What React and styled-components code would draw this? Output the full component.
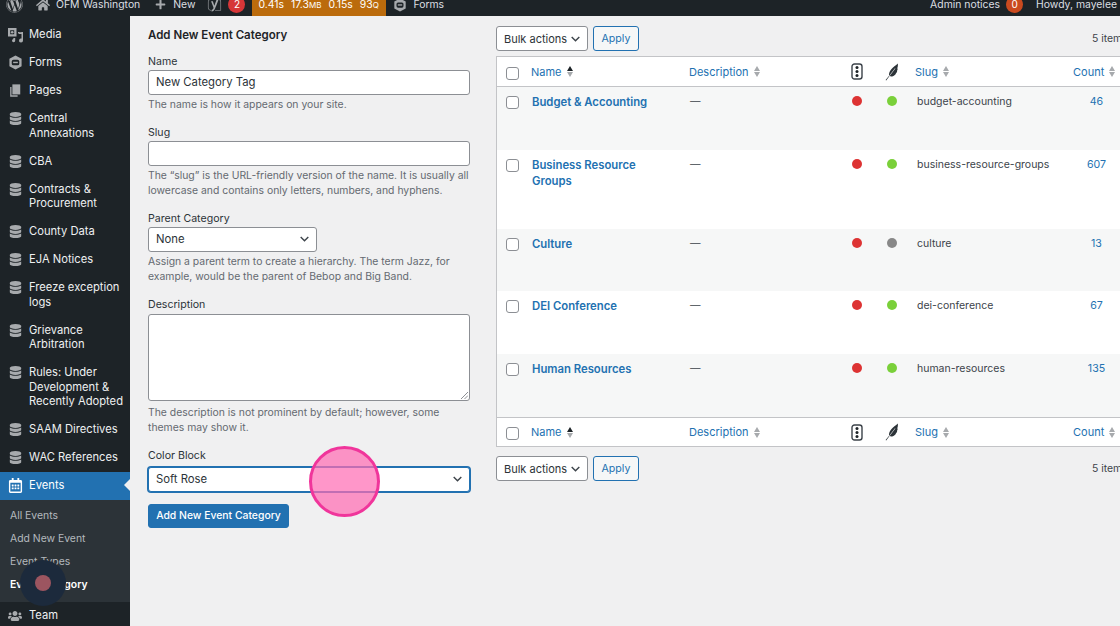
import React from 'react';
import styled, { createGlobalStyle } from 'styled-components';
import { FaWordpress, FaHome, FaPlus, FaDatabase, FaUsers, FaRegCalendarAlt, FaYoast } from 'react-icons/fa';

const GlobalStyle = createGlobalStyle`
  html, body {
    margin: 0;
    height: 100%;
    overflow: hidden;
    background: #f0f0f1;
    font-family: Inter, "Liberation Sans", sans-serif;
    font-size: 11.3px;
    color: #3c434a;
  }
`;

const Page = styled.div`
  position: relative;
  width: 1120px;
  height: 626px;
  overflow: hidden;
`;

const TopBar = styled.div`
  height: 16px;
  background: #1d2327;
  color: #dcdfe2;
  font-size: 10.4px;
  display: flex;
  align-items: center;
  justify-content: space-between;
  overflow: hidden;
`;

const BarGroup = styled.div`
  display: flex;
  align-items: center;
  height: 16px;
  margin-top: -7px;
  line-height: 16px;
  white-space: nowrap;
`;

const BarItem = styled.span`
  display: inline-flex;
  align-items: center;
  gap: ${({ $gap }) => $gap || 8}px;
  margin-left: ${({ $left }) => $left || 0}px;
`;

const Badge = styled.span`
  display: inline-block;
  width: 17px;
  height: 17px;
  border-radius: 9px;
  background: ${({ $color }) => $color};
  color: #fff;
  text-align: center;
  font-size: 10px;
  line-height: 16px;
  margin-left: ${({ $left }) => $left || 0}px;
`;

const Timer = styled.span`
  display: flex;
  box-sizing: border-box;
  gap: 7px;
  width: 134px;
  background: #bb6b0c;
  color: #fff;
  padding: 0 0 0 6px;
  margin-left: 7px;
  height: 32px;
  align-items: center;
  small { font-size: 8px; }
`;

const Body = styled.div`
  display: flex;
  height: 610px;
`;

const Sidebar = styled.nav`
  width: 130px;
  flex: none;
  background: #1d2327;
  padding-top: 4.5px;
  color: #eef0f1;
  font-size: 11.2px;
`;

const MenuItem = styled.div`
  position: relative;
  display: flex;
  padding: 6.75px 0;
  line-height: 14.5px;
  background: ${({ $active }) => ($active ? '#2271b1' : 'transparent')};
  color: ${({ $active }) => ($active ? '#fff' : '#eef0f1')};
  span:last-child { max-width: 100px; }
  ${({ $active }) =>
    $active &&
    `&::after {
      content: '';
      position: absolute;
      right: 0;
      top: 7px;
      border: 6.5px solid transparent;
      border-right-color: #f0f0f1;
      border-left: 0;
    }`}
`;

const MenuIcon = styled.span`
  width: 29px;
  height: 14.5px;
  flex: none;
  display: flex;
  align-items: center;
  justify-content: center;
  padding-left: 1px;
  box-sizing: border-box;
  color: ${({ $active }) => ($active ? '#fff' : '#a7aaad')};
  svg { display: block; }
`;

const SubMenu = styled.div`
  background: #2c3338;
  padding: 4px 0 6px;
`;

const SubItem = styled.div`
  padding-left: 10px;
  height: 23px;
  line-height: 23px;
  font-size: 10.4px;
  color: ${({ $current }) => ($current ? '#fff' : '#b4b9be')};
  font-weight: ${({ $current }) => ($current ? 600 : 400)};
`;

const Content = styled.main`
  flex: 1;
  min-width: 0;
  display: flex;
  gap: 26px;
  padding-left: 18px;
`;

const FormColumn = styled.section`
  width: 322px;
  flex: none;
`;

const Heading = styled.h2`
  margin: 11.5px 0 12px;
  font-size: 11.5px;
  font-weight: 600;
  line-height: 14px;
  color: #1d2327;
`;

const Field = styled.div`
  margin-bottom: ${({ $gap }) => $gap ?? 13}px;
`;

const Label = styled.label`
  display: block;
  font-size: 10.6px;
  line-height: 15px;
  margin-bottom: ${({ $gap }) => $gap ?? 1.5}px;
  color: #2c3338;
`;

const TextInput = styled.div`
  box-sizing: border-box;
  height: 24.5px;
  background: #fff;
  border: 1px solid #8c8f94;
  border-radius: 3px;
  padding: 0 7px;
  line-height: 23px;
  color: #2c3338;
`;

const TextArea = styled.div`
  position: relative;
  box-sizing: border-box;
  height: 86.5px;
  background: #fff;
  border: 1px solid #8c8f94;
  border-radius: 3px;
`;

const Hint = styled.p`
  margin: ${({ $top }) => $top ?? 2}px 0 0;
  font-size: 10.4px;
  line-height: 15px;
  color: #646970;
`;

const SelectBox = styled.div`
  box-sizing: border-box;
  display: flex;
  align-items: center;
  justify-content: space-between;
  width: ${({ $width }) => ($width ? `${$width}px` : '100%')};
  height: 24.5px;
  background: #fff;
  border: 1px solid ${({ $focus }) => ($focus ? '#2271b1' : '#8c8f94')};
  box-shadow: ${({ $focus }) => ($focus ? '0 0 0 1px #2271b1' : 'none')};
  border-radius: 3px;
  padding: 0 7px;
  color: #2c3338;
`;

const PrimaryButton = styled.button`
  display: block;
  box-sizing: border-box;
  width: 141px;
  height: 24.5px;
  padding: 0;
  background: #2271b1;
  border: 1px solid #2271b1;
  border-radius: 3px;
  color: #fff;
  font: 500 10.4px Inter, sans-serif;
`;

const TableColumn = styled.section`
  width: 660px;
  flex: none;
`;

const Toolbar = styled.div`
  display: flex;
  align-items: center;
  gap: 5px;
  height: 25px;
  margin: ${({ $top }) => $top}px 0 ${({ $bottom }) => $bottom}px;
`;

const Bulk = styled(SelectBox)`
  width: 92px;
  height: 25px;
  font-size: 11px;
  white-space: nowrap;
`;

const ApplyButton = styled.button`
  box-sizing: border-box;
  height: 25px;
  width: 46px;
  padding: 0;
  background: #f6f7f7;
  border: 1px solid #2271b1;
  border-radius: 3px;
  color: #2271b1;
  font: 400 10.6px Inter, sans-serif;
`;

const ItemCount = styled.span`
  margin-left: 448px;
  font-size: 10.4px;
  white-space: nowrap;
`;

const Table = styled.div`
  background: #fff;
  border: 1px solid #c3c4c7;
  width: 660px;
  box-sizing: border-box;
`;

const Row = styled.div`
  display: grid;
  grid-template-columns: 34px 158px 151px 34px 36px 163px 1fr;
  height: ${({ $h }) => $h}px;
  box-sizing: border-box;
  background: ${({ $alt }) => ($alt ? '#f6f7f7' : '#fff')};
  border-top: ${({ $top }) => ($top ? '1px solid #c3c4c7' : '0')};
  border-bottom: ${({ $bottom }) => ($bottom ? '1px solid #c3c4c7' : '0')};
`;

const Cell = styled.div`
  padding: 7px 0 0 ${({ $left }) => $left || 0}px;
  line-height: 16px;
  display: ${({ $center }) => ($center ? 'flex' : 'block')};
  justify-content: center;
  font-size: 10.5px;
`;

const CountCell = styled(Cell)`
  width: 47px;
  text-align: center;
  color: #2271b1;
  font-size: 10.6px;
`;

const HeadCell = styled.div`
  display: flex;
  align-items: center;
  justify-content: ${({ $center }) => ($center ? 'center' : 'flex-start')};
  gap: 5px;
  color: #2271b1;
  font-size: 11px;
  padding-left: ${({ $left }) => $left || 0}px;
`;

const Check = styled.span`
  display: block;
  box-sizing: border-box;
  width: 13px;
  height: 13px;
  margin: ${({ $top }) => $top}px 0 0 9px;
  background: #fff;
  border: 1px solid #8c8f94;
  border-radius: 3px;
`;

const TermLink = styled.a`
  display: block;
  color: #2271b1;
  font-weight: 600;
  font-size: 11.3px;
  padding-right: 30px;
`;

const Dot = styled.span`
  width: 10px;
  height: 10px;
  border-radius: 50%;
  margin-top: 2px;
  background: ${({ $color }) => $color};
`;

const SortArrows = styled.span`
  display: inline-flex;
  flex-direction: column;
  gap: 1px;
  &::before, &::after {
    content: '';
    border-left: 3.5px solid transparent;
    border-right: 3.5px solid transparent;
  }
  &::before { border-bottom: 5px solid ${({ $up }) => ($up ? '#1d2327' : '#a7aaad')}; }
  &::after { border-top: 5px solid #a7aaad; }
`;

const Ring = styled.div`
  position: absolute;
  box-sizing: border-box;
  border-radius: 50%;
  left: ${({ $x }) => $x}px;
  top: ${({ $y }) => $y}px;
  width: ${({ $size }) => $size}px;
  height: ${({ $size }) => $size}px;
  background: ${({ $bg }) => $bg};
  border: ${({ $border }) => $border || 'none'};
`;

const TextAreaGrip = styled.svg`
  position: absolute;
  right: 1px;
  bottom: 1px;
`;

const Chevron = () => (
  <svg width="9" height="6" viewBox="0 0 9 6" fill="none" stroke="#3c434a" strokeWidth="1.4">
    <path d="M.7 1 4.500 4.800 8.300 1" />
  </svg>
);

const FormsIcon = ({ size = 16, cut = '#1d2327' }) => (
  <svg width={size} height={size} viewBox="0 0 16 16" fill="currentColor">
    <path d="M8 .5 14.500 4v8L8 15.500 1.500 12V4z" />
    <rect x="4" y="5" width="8" height="6" rx="1.800" fill={cut} />
    <rect x="5.500" y="7.200" width="5" height="1.500" fill="currentColor" />
  </svg>
);

const MediaIcon = () => (
  <svg width="17" height="16" viewBox="0 0 17 16" fill="currentColor">
    <path d="M1 1h8.500v8.500H1z M3.200 3.200v4h4v-4z" fillRule="evenodd" />
    <circle cx="5.200" cy="5.200" r="1.300" />
    <path d="M11 5h1.500v1.500H11z M15 5h1v8.500a2 2 0 1 1-1.500-1.900V7H12V5.500z" />
    <path d="M6 11h2.200v2.500a1.600 1.600 0 1 1-1.500-1.500z" />
  </svg>
);

const PagesIcon = () => (
  <svg width="14" height="15" viewBox="0 0 16 16" fill="currentColor">
    <path d="M5 1h9v11.500H5z" />
    <path d="M2.500 4H4v9.500h7V15H2.500z" />
  </svg>
);

const TrafficIcon = () => (
  <svg width="12" height="17" viewBox="0 0 12 17">
    <rect x="1" y="1" width="10" height="15" rx="2.500" fill="none" stroke="#3c434a" strokeWidth="1.400" />
    <circle cx="6" cy="4.600" r="1.500" fill="#1d2327" />
    <circle cx="6" cy="8.500" r="1.500" fill="#1d2327" />
    <circle cx="6" cy="12.400" r="1.500" fill="#1d2327" />
  </svg>
);

const QuillIcon = () => (
  <svg width="14" height="18" viewBox="0 0 14 18" fill="#2c3338">
    <path d="M12.800.6c.3 2-.1 3.600-.5 4.600.5.400.4 1.600-.2 2.400.2.900-.3 2.200-1.200 3-.4 1.400-2 2.600-3.700 2.800-1 .1-2 0-2.700-.4L1.200 17.500.6 17l3.500-4.300C3.700 11 4.300 8.500 6.300 6.300 8 4.400 10.800 2.500 12.800.6z" />
    <path d="M3.800 13.200 10 5.300l.4.300-6.200 7.900z" fill="#fff" />
  </svg>
);

const menu = [
  { icon: <MediaIcon />, label: 'Media' },
  { icon: <FormsIcon size={15} />, label: 'Forms' },
  { icon: <PagesIcon />, label: 'Pages' },
  { label: 'Central Annexations' },
  { label: 'CBA' },
  { label: 'Contracts & Procurement' },
  { label: 'County Data' },
  { label: 'EJA Notices' },
  { label: 'Freeze exception logs' },
  { label: 'Grievance Arbitration' },
  { label: 'Rules: Under Development & Recently Adopted' },
  { label: 'SAAM Directives' },
  { label: 'WAC References' },
];

const terms = [
  { name: 'Budget & Accounting', slug: 'budget-accounting', count: 46, h: 63, alt: true, seo: '#7ad03a' },
  { name: 'Business Resource Groups', slug: 'business-resource-groups', count: 607, h: 79, seo: '#7ad03a' },
  { name: 'Culture', slug: 'culture', count: 13, h: 62, alt: true, seo: '#888888' },
  { name: 'DEI Conference', slug: 'dei-conference', count: 67, h: 63, seo: '#7ad03a' },
  { name: 'Human Resources', slug: 'human-resources', count: 135, h: 63, alt: true, seo: '#7ad03a' },
];

const HeaderRow = ({ top, bottom }) => (
  <Row $h={top ? 29 : 30} $top={top} $bottom={bottom}>
    <Check $top={top ? 9 : 10} />
    <HeadCell>Name <SortArrows $up /></HeadCell>
    <HeadCell>Description <SortArrows /></HeadCell>
    <HeadCell $center><TrafficIcon /></HeadCell>
    <HeadCell $center><QuillIcon /></HeadCell>
    <HeadCell $left={5}>Slug <SortArrows /></HeadCell>
    <HeadCell>Count <SortArrows /></HeadCell>
  </Row>
);

const Tools = ({ top, bottom }) => (
  <Toolbar $top={top} $bottom={bottom}>
    <Bulk>Bulk actions <Chevron /></Bulk>
    <ApplyButton>Apply</ApplyButton>
    <ItemCount>5 items</ItemCount>
  </Toolbar>
);

export default function App() {
  return (
    <Page>
      <GlobalStyle />
      <TopBar>
        <BarGroup>
          <BarItem $left={6}><FaWordpress size={17} color="#a7aaad" /></BarItem>
          <BarItem $left={13} $gap={6}><FaHome size={14} color="#a7aaad" />OFM Washington</BarItem>
          <BarItem $left={15} $gap={7}><FaPlus size={11} color="#a7aaad" />New</BarItem>
          <BarItem $left={12}><FaYoast size={15} color="#a7aaad" /></BarItem>
          <Badge $color="#d63638" $left={6}>2</Badge>
          <Timer>
            <span>0.41s</span>
            <span>17.3<small>MB</small></span>
            <span>0.15s</span>
            <span>93<small>Q</small></span>
          </Timer>
          <BarItem $left={7} $gap={6} style={{ color: '#a7aaad' }}>
            <FormsIcon size={14} />
            <span style={{ color: '#dcdfe2' }}>Forms</span>
          </BarItem>
        </BarGroup>
        <BarGroup>
          <span>Admin notices</span>
          <Badge $color="#ca4a1f" $left={6}>0</Badge>
          <BarItem $left={13} style={{ marginRight: 3 }}>Howdy, mayelee</BarItem>
        </BarGroup>
      </TopBar>
      <Body>
        <Sidebar>
          {menu.map((m) => (
            <MenuItem key={m.label}>
              <MenuIcon>{m.icon || <FaDatabase size={13} />}</MenuIcon>
              <span>{m.label}</span>
            </MenuItem>
          ))}
          <MenuItem $active>
            <MenuIcon $active><FaRegCalendarAlt size={15} /></MenuIcon>
            <span>Events</span>
          </MenuItem>
          <SubMenu>
            <SubItem>All Events</SubItem>
            <SubItem>Add New Event</SubItem>
            <SubItem>Event Types</SubItem>
            <SubItem $current>Event Category</SubItem>
          </SubMenu>
          <MenuItem>
            <MenuIcon><FaUsers size={14} /></MenuIcon>
            <span>Team</span>
          </MenuItem>
        </Sidebar>
        <Content>
          <FormColumn>
            <Heading>Add New Event Category</Heading>
            <Field>
              <Label>Name</Label>
              <TextInput>New Category Tag</TextInput>
              <Hint>The name is how it appears on your site.</Hint>
            </Field>
            <Field>
              <Label>Slug</Label>
              <TextInput />
              <Hint>The “slug” is the URL-friendly version of the name. It is usually all lowercase and contains only letters, numbers, and hyphens.</Hint>
            </Field>
            <Field>
              <Label>Parent Category</Label>
              <SelectBox $width={169}>None <Chevron /></SelectBox>
              <Hint>Assign a parent term to create a hierarchy. The term Jazz, for example, would be the parent of Bebop and Big Band.</Hint>
            </Field>
            <Field>
              <Label $gap={2.5}>Description</Label>
              <TextArea>
                <TextAreaGrip width="8" height="8" viewBox="0 0 8 8">
                  <path d="M1 8 8 1M4.500 8 8 4.500" stroke="#8c8f94" strokeWidth="1" />
                </TextAreaGrip>
              </TextArea>
              <Hint $top={4.5}>The description is not prominent by default; however, some themes may show it.</Hint>
            </Field>
            <Field $gap={12}>
              <Label $gap={4}>Color Block</Label>
              <SelectBox $focus>Soft Rose <Chevron /></SelectBox>
            </Field>
            <PrimaryButton>Add New Event Category</PrimaryButton>
          </FormColumn>
          <TableColumn>
            <Tools top={10} bottom={5} />
            <Table>
              <HeaderRow bottom />
              {terms.map((t) => (
                <Row key={t.slug} $h={t.h} $alt={t.alt}>
                  <Check $top={9} />
                  <Cell $left={1}><TermLink>{t.name}</TermLink></Cell>
                  <Cell $left={1}>—</Cell>
                  <Cell $center><Dot $color="#dd3333" /></Cell>
                  <Cell $center><Dot $color={t.seo} /></Cell>
                  <Cell $left={7}>{t.slug}</Cell>
                  <CountCell>{t.count}</CountCell>
                </Row>
              ))}
              <HeaderRow top />
            </Table>
            <Tools top={9} bottom={0} />
          </TableColumn>
        </Content>
      </Body>
      <Ring $x={309} $y={446} $size={71} $bg="rgba(255,110,180,0.72)" $border="3px solid #f0359b" />
      <Ring $x={20} $y={560} $size={46} $bg="#1c2a3c" />
      <Ring $x={35} $y={575} $size={16} $bg="#9c5560" />
    </Page>
  );
}
